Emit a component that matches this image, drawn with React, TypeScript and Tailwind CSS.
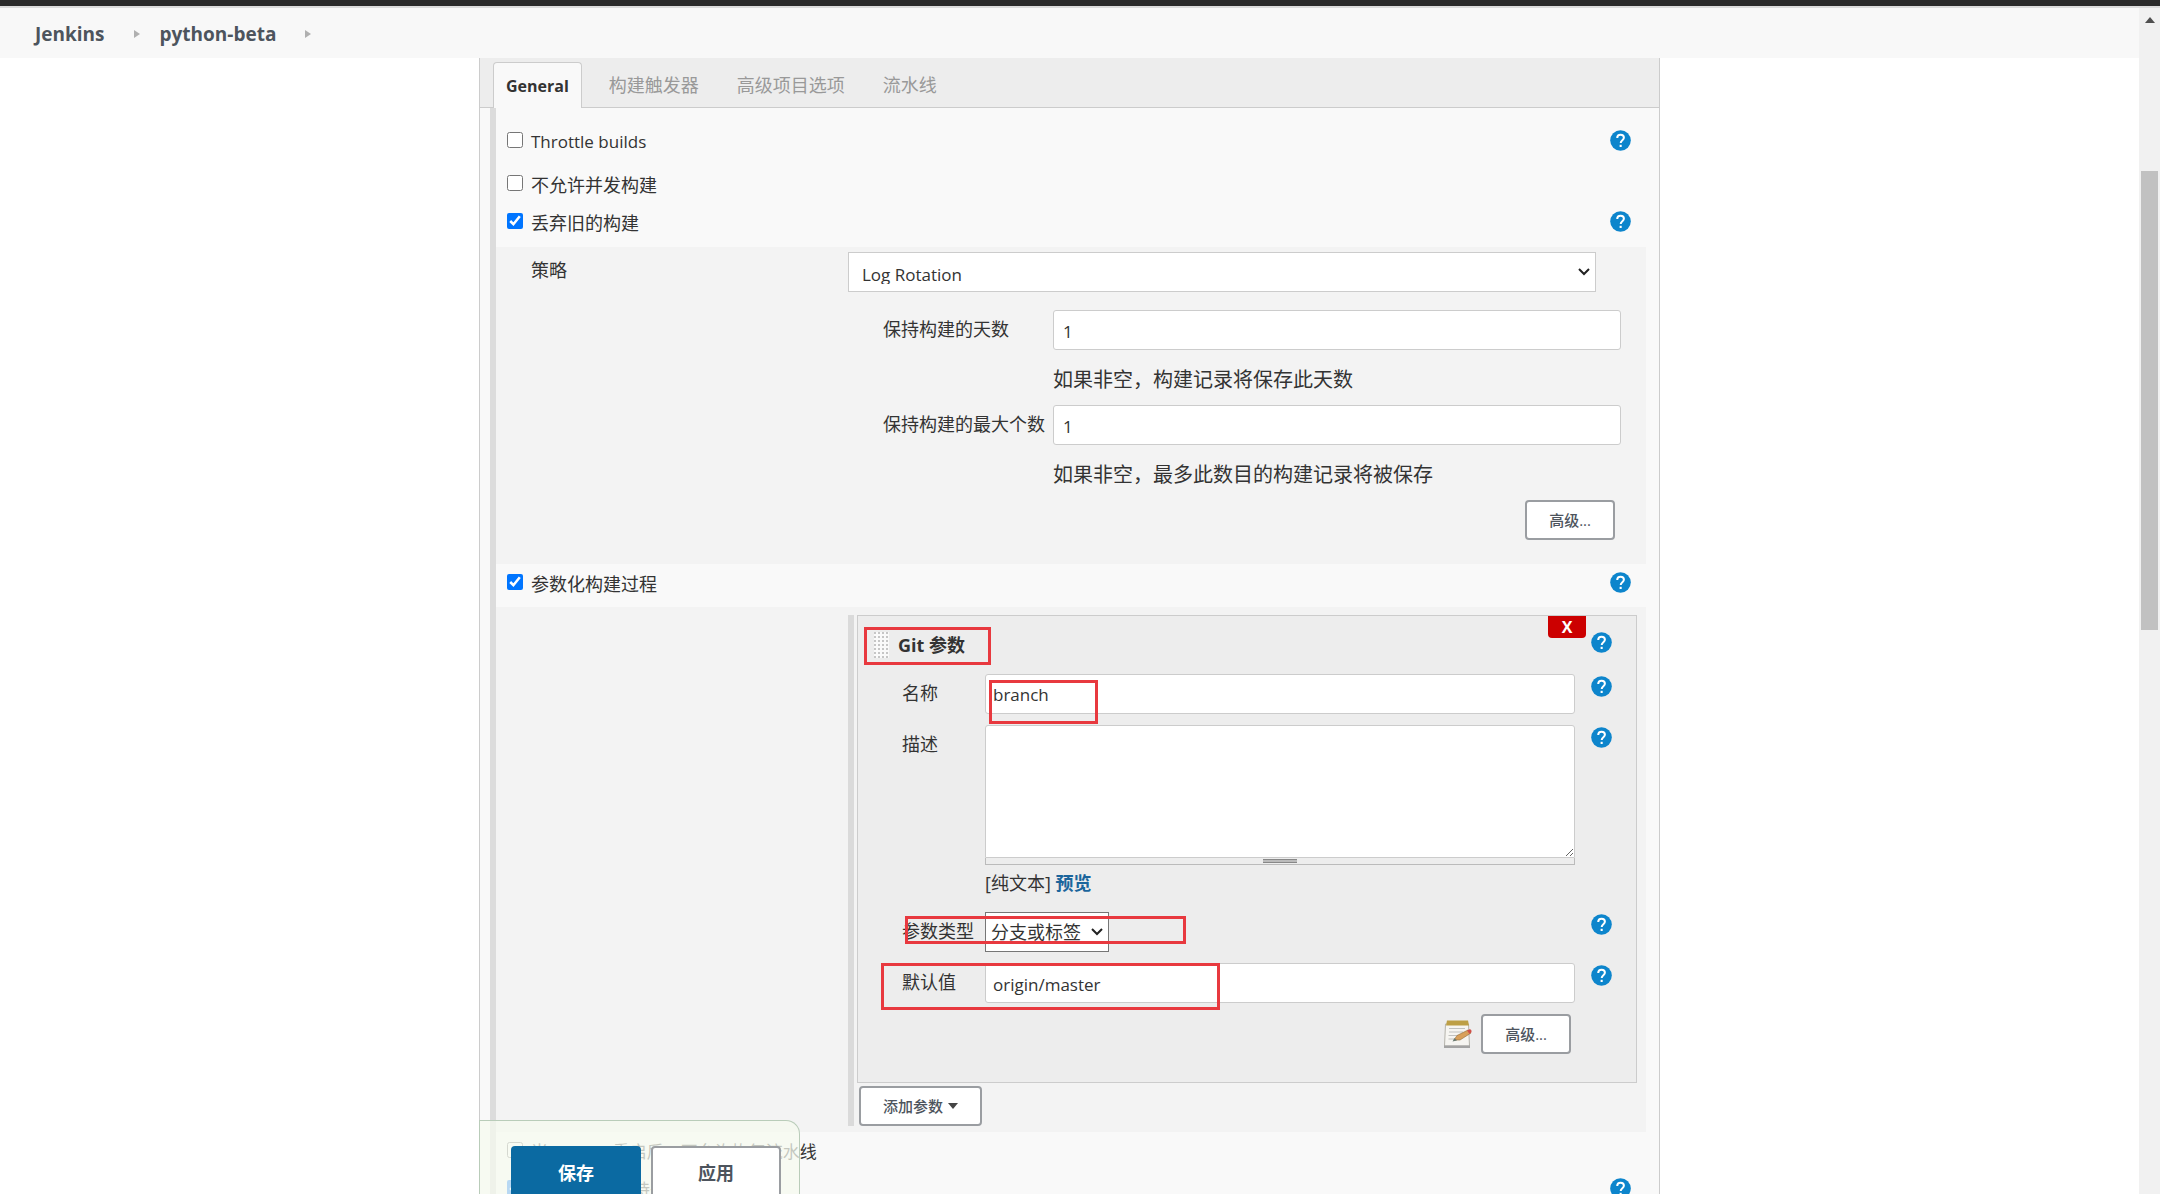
import React, { useState } from 'react';

const TABS = ['General', '构建触发器', '高级项目选项', '流水线'];

function HelpIcon({ label }: { label: string }) {
  return (
    <button type="button" aria-label={`帮助: ${label}`} className="block size-[21px] shrink-0">
      <svg viewBox="0 0 21 21" className="size-[21px]">
        <circle cx="10.5" cy="10.5" r="10.3" fill="#0d85cc" />
        <path
          d="M7.2 8.1c0-2 1.4-3.3 3.4-3.3s3.3 1.2 3.3 3c0 2.4-3.2 2.5-3.2 5.2"
          fill="none"
          stroke="#fff"
          strokeWidth="2"
        />
        <rect x="9.6" y="14.8" width="2.1" height="2.2" fill="#fff" />
      </svg>
    </button>
  );
}

function Chevron() {
  return (
    <svg viewBox="0 0 12 8" className="pointer-events-none absolute top-4 right-[6px] h-2 w-3">
      <path d="M1 1l5 5 5-5" fill="none" stroke="#222" strokeWidth="2" />
    </svg>
  );
}

function NotepadIcon() {
  return (
    <svg viewBox="0 0 30 30" className="size-[30px]">
      <path d="M2.5 5h23l1 22H1.500z" fill="#f6f5f1" stroke="#b5b3ab" />
      <path d="M1 26.500h26v2.500H1z" fill="#a3a3a3" />
      <path d="M4 1.500h21l1 5H3z" fill="#bd9f45" />
      <path d="M6 9.500h16M6 13h14M5.500 16.500h9M5.500 20h6" stroke="#c0c1bf" />
      <path d="M11 21l3-4.500L25 11l3 3-11 7z" fill="#d9a05a" stroke="#8e6a35" strokeWidth="0.6" />
      <path d="M24 11.500l2.500-1.200c1.500-.2 2.600 1.500 1.800 2.900L26.500 15z" fill="#cf5048" />
      <path d="M9.500 22.500l2-3.500 2.500 2.500z" fill="#6b7a70" />
    </svg>
  );
}

type CheckRowProps = {
  id: string;
  label: string;
  checked?: boolean;
  help?: boolean;
  className?: string;
};

function CheckRow({ id, label, checked = false, help = false, className = '' }: CheckRowProps) {
  const [on, setOn] = useState(checked);
  return (
    <div className={`flex pl-[11px] pr-[15px] ${className}`}>
      <input
        id={id}
        type="checkbox"
        checked={on}
        onChange={() => setOn(!on)}
        className="mt-[2px] size-4 shrink-0 accent-[#0075ff]"
      />
      <label htmlFor={id} className="ml-2 flex-1 leading-6">
        {label}
      </label>
      {help && <HelpIcon label={label} />}
    </div>
  );
}

function SmallButton({ children }: { children: React.ReactNode }) {
  return (
    <button
      type="button"
      className="flex h-10 items-center rounded border-2 border-[#9a9da1] bg-white px-[22px] text-[15px] font-medium text-[#4d545d]"
    >
      {children}
    </button>
  );
}

const INPUT = 'block w-full rounded-[3px] border border-[#ccc] bg-white';

export default function App() {
  const [tab, setTab] = useState('General');
  const [strategy, setStrategy] = useState('log');
  const [days, setDays] = useState('1');
  const [count, setCount] = useState('1');
  const [name, setName] = useState('branch');
  const [description, setDescription] = useState('');
  const [type, setType] = useState('both');
  const [defaultValue, setDefaultValue] = useState('origin/master');

  return (
    <div className="flex h-screen flex-col overflow-hidden bg-white font-['Open_Sans','Noto_Sans_CJK_SC',sans-serif] text-[18px] text-[#333]">
      <div className="h-2 shrink-0 border-b-2 border-[#dcdcdc] bg-[#2b2b2b]" />
      <div className="flex min-h-0 flex-1">
        <div className="flex min-w-0 flex-1 flex-col">
          <nav className="flex h-[50px] shrink-0 items-center bg-[#f8f8f8] pt-[2px] pl-[35px] text-[19px] font-bold text-[#4d545d]">
            <a href="#jenkins">Jenkins</a>
            <svg viewBox="0 0 6 8" className="mr-5 ml-[29px] h-2 w-[6px]">
              <path d="M0 0l6 4-6 4z" fill="#b0b0b0" />
            </svg>
            <a href="#python-beta">python-beta</a>
            <svg viewBox="0 0 6 8" className="ml-[29px] h-2 w-[6px]">
              <path d="M0 0l6 4-6 4z" fill="#b0b0b0" />
            </svg>
          </nav>

          <main className="relative mx-auto flex min-h-0 w-full max-w-[1181px] flex-1 flex-col border-x border-[#ccc] bg-[#f9f9f9]">
            <div className="flex h-[50px] shrink-0 items-end border-b border-[#ccc] bg-[#ededed] pl-[13px]">
              {TABS.map((item) => (
                <button
                  key={item}
                  type="button"
                  onClick={() => setTab(item)}
                  className={
                    item === tab
                      ? '-mb-px mr-2 h-[46px] rounded-t border border-b-0 border-[#ccc] bg-[#f9f9f9] px-3 text-[16px] font-bold text-[#333]'
                      : 'h-[44px] px-[19px] text-[#999]'
                  }
                >
                  {item}
                </button>
              ))}
            </div>

            <div className="min-h-0 flex-1 overflow-hidden pr-[13px] pl-[10px]">
              <form className="border-l-6 border-[#dcdcdc]" onSubmit={(e) => e.preventDefault()}>
                <CheckRow id="throttle" label="Throttle builds" help className="h-[65px] pt-[22px] text-[17px]" />
                <CheckRow id="concurrent" label="不允许并发构建" className="h-[38px]" />
                <CheckRow id="discard" label="丢弃旧的构建" checked help className="h-[36px]" />

                <section className="bg-[#f3f3f3] pt-[5px] pr-[25px] pb-6 pl-[35px]">
                  <div className="flex pr-[25px]">
                    <label htmlFor="strategy" className="w-[317px] shrink-0 pt-[6px] leading-6">
                      策略
                    </label>
                    <div className="relative flex-1">
                      <select
                        id="strategy"
                        value={strategy}
                        onChange={(e) => setStrategy(e.target.value)}
                        className="block h-10 w-full appearance-none border border-[#ccc] bg-white pt-[13px] pb-[7px] pl-[13px] text-[17px] leading-[18px]"
                      >
                        <option value="log">Log Rotation</option>
                      </select>
                      <Chevron />
                    </div>
                  </div>

                  <div className="grid grid-cols-[170px_1fr] pt-[18px] pl-[352px]">
                    <label htmlFor="days" className="pt-[7px] leading-6">
                      保持构建的天数
                    </label>
                    <input
                      id="days"
                      value={days}
                      onChange={(e) => setDays(e.target.value)}
                      className={`${INPUT} h-10 pt-[2px] pl-[9px] text-[17px]`}
                    />
                    <p className="col-start-2 h-[55px] pt-[15px] text-[20px] leading-[30px]">
                      如果非空，构建记录将保存此天数
                    </p>
                    <label htmlFor="count" className="pt-[7px] leading-6">
                      保持构建的最大个数
                    </label>
                    <input
                      id="count"
                      value={count}
                      onChange={(e) => setCount(e.target.value)}
                      className={`${INPUT} h-10 pt-[2px] pl-[9px] text-[17px]`}
                    />
                    <p className="col-start-2 h-[55px] pt-[15px] text-[20px] leading-[30px]">
                      如果非空，最多此数目的构建记录将被保存
                    </p>
                  </div>
                  <div className="flex justify-end pr-[6px]">
                    <SmallButton>高级...</SmallButton>
                  </div>
                </section>

                <CheckRow id="parameterized" label="参数化构建过程" checked help className="h-[43px] pt-2" />

                <section className="bg-[#f3f3f3] pt-2 pr-[9px] pb-[6px] pl-[352px]">
                  <div className="border-l-6 border-[#dadada] pl-[3px]">
                    <div className="relative h-[468px] border border-[#ccc] bg-[#ededed] pr-6 pl-[16px]">
                      <div className="flex h-[58px] items-start pt-4">
                        <svg viewBox="0 0 15 26" className="h-[26px] w-[15px]">
                          <defs>
                            <pattern id="grip" width="4" height="4" patternUnits="userSpaceOnUse">
                              <rect width="4" height="4" fill="#fafafa" />
                              <rect width="2" height="2" fill="#c6c6c6" />
                            </pattern>
                          </defs>
                          <rect width="15" height="26" fill="url(#grip)" />
                        </svg>
                        <h3 className="ml-[9px] flex-1 text-[18px] leading-[26px] font-bold">Git 参数</h3>
                        <button
                          type="button"
                          className="-mt-4 mr-[5px] h-[22px] w-[38px] rounded-b bg-[#c00] text-[16px] leading-[20px] font-bold text-white"
                        >
                          X
                        </button>
                        <HelpIcon label="Git 参数" />
                      </div>

                      <div className="grid grid-cols-[83px_1fr_37px] pl-[28px]">
                        <label htmlFor="name" className="pt-[7px] leading-6">
                          名称
                        </label>
                        <input
                          id="name"
                          value={name}
                          onChange={(e) => setName(e.target.value)}
                          className={`${INPUT} mb-[11px] h-10 pl-[7px] text-[17px]`}
                        />
                        <div className="pt-[2px] pl-4">
                          <HelpIcon label="名称" />
                        </div>

                        <label htmlFor="description" className="pt-[7px] leading-6">
                          描述
                        </label>
                        <div>
                          <textarea
                            id="description"
                            value={description}
                            onChange={(e) => setDescription(e.target.value)}
                            className="block h-[133px] w-full resize rounded-t-[3px] border border-[#ccc] bg-white"
                          />
                          <div className="flex h-[7px] items-center justify-center border border-t-0 border-[#bbb]">
                            <div className="h-1 w-[34px] border-y border-[#888] bg-[#bbb]" />
                          </div>
                          <p className="h-[47px] pt-[6px] leading-6">
                            [纯文本]{' '}
                            <a href="#preview" className="font-bold text-[#1b659c]">
                              预览
                            </a>
                          </p>
                        </div>
                        <div className="pt-[2px] pl-4">
                          <HelpIcon label="描述" />
                        </div>

                        <label htmlFor="type" className="pt-[7px] leading-6">
                          参数类型
                        </label>
                        <div className="relative mb-[11px] w-[124px]">
                          <select
                            id="type"
                            value={type}
                            onChange={(e) => setType(e.target.value)}
                            className="block h-10 w-full appearance-none border border-[#767676] bg-white pl-[5px]"
                          >
                            <option value="both">分支或标签</option>
                          </select>
                          <Chevron />
                        </div>
                        <div className="pt-[2px] pl-4">
                          <HelpIcon label="参数类型" />
                        </div>

                        <label htmlFor="default" className="pt-[7px] leading-6">
                          默认值
                        </label>
                        <input
                          id="default"
                          value={defaultValue}
                          onChange={(e) => setDefaultValue(e.target.value)}
                          className={`${INPUT} mb-[11px] h-10 pt-[2px] pl-[7px] text-[17px]`}
                        />
                        <div className="pt-[2px] pl-4">
                          <HelpIcon label="默认值" />
                        </div>
                      </div>
                      <div className="flex items-center justify-end gap-2 pr-[41px]">
                        <button type="button" aria-label="编辑">
                          <NotepadIcon />
                        </button>
                        <SmallButton>高级...</SmallButton>
                      </div>

                      {/* highlight marks */}
                      <div className="pointer-events-none absolute top-[11px] left-[6px] h-[38px] w-[127px] border-3 border-[#e8393f]" />
                      <div className="pointer-events-none absolute top-[64px] left-[131px] h-[44px] w-[109px] border-3 border-[#e8393f]" />
                      <div className="pointer-events-none absolute top-[300px] left-[47px] h-[28px] w-[281px] border-3 border-[#e8393f]" />
                      <div className="pointer-events-none absolute top-[347px] left-[23px] h-[47px] w-[339px] border-3 border-[#e8393f]" />
                    </div>
                    <div className="flex pt-[3px] pl-[2px]">
                      <SmallButton>
                        添加参数
                        <svg viewBox="0 0 10 6" className="ml-[5px] h-[6px] w-[10px]">
                          <path d="M0 0h10L5 6z" fill="#444" />
                        </svg>
                      </SmallButton>
                    </div>
                  </div>
                </section>

                <CheckRow
                  id="resume"
                  label="当 master 重启后，不允许恢复流水线"
                  className="h-[46px] pt-2 text-[17px]"
                />
                <CheckRow
                  id="durability"
                  label="流水线效率、持久保存设置覆盖"
                  checked
                  help
                  className="h-[36px] text-[17px]"
                />
              </form>
            </div>

            <div className="absolute bottom-0 -left-px flex h-[74px] w-[321px] gap-[10px] rounded-tr-[14px] border border-b-0 border-[#b9ccb9] bg-[#f6f9ef]/75 pt-[25px] pl-[31px]">
              <button type="submit" className="h-[54px] w-[130px] rounded bg-[#0b6aa2] text-[18px] font-bold text-white">
                保存
              </button>
              <button
                type="button"
                className="h-[54px] w-[130px] rounded border-2 border-[#9a9da1] bg-white text-[18px] font-bold text-[#4d545d]"
              >
                应用
              </button>
            </div>
          </main>
        </div>

        <div className="flex w-[21px] shrink-0 flex-col items-center bg-[#f1f1f1]">
          <svg viewBox="0 0 10 6" className="mt-[9px] h-[6px] w-[10px]">
            <path d="M0 6h10L5 0z" fill="#505050" />
          </svg>
          <div className="mt-[148px] h-[459px] w-[17px] bg-[#c1c1c1]" />
        </div>
      </div>
    </div>
  );
}
